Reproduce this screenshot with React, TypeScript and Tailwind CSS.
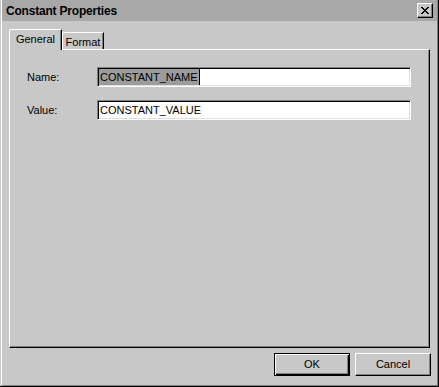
const CloseGlyph = () => {
  const rows = ["XX....XX", ".XX..XX.", "..XXXX..", "...XX...", "..XXXX..", ".XX..XX.", "XX....XX"];
  return (
    <svg width="8" height="7" viewBox="0 0 8 7" shapeRendering="crispEdges">
      {rows.flatMap((r, y) =>
        r.split("").map((c, x) => (c === "X" ? <rect key={`${x}-${y}`} x={x} y={y} width="1" height="1" fill="#000" /> : null))
      )}
    </svg>
  );
};

export default function App() {
  return (
    <div className="w-[439px] h-[387px] bg-[#c8c8c8] font-['Liberation_Sans',Arial,sans-serif] text-[11px] leading-none text-black select-none">
      <div className="h-full border-r border-b border-black pl-px">
        <div className="h-full flex flex-col border-l border-r border-b border-l-white border-r-[#808080] border-b-[#808080]">
          {/* title bar */}
          <div className="h-[21px] shrink-0 flex items-center justify-between bg-[#a8a8a8] pl-[4px] pr-[4px]">
            <span className="font-bold text-[12px] tracking-[-0.2px]">Constant Properties</span>
            <button className="w-[16px] h-[15px] flex items-center justify-center bg-[#c8c8c8] border-t border-l border-r border-b border-t-white border-l-white border-r-black border-b-black shadow-[inset_-1px_-1px_#808080]">
              <CloseGlyph />
            </button>
          </div>

          {/* tabs */}
          <div className="mt-[8px] pl-[7px] h-[20px] flex items-end">
            <div className="relative z-10 -mb-px w-[53px] h-[21px] bg-[#c8c8c8] border-t border-l border-r border-t-white border-l-white border-r-black rounded-tl-[2px] shadow-[inset_-1px_0_#808080] flex justify-center pt-[4px]">
              General
            </div>
            <div className="w-[42px] h-[17px] bg-[#c8c8c8] border-t border-l border-r border-t-white border-l-white border-r-black rounded-tl-[2px] shadow-[inset_-1px_0_#808080] flex justify-center pt-[4px]">
              Format
            </div>
          </div>

          {/* panel */}
          <div className="mx-[7px] h-[299px] shrink-0 border-t border-l border-r border-b border-t-white border-l-white border-r-black border-b-black shadow-[inset_-1px_-1px_#808080] pt-[17px] pl-[17px] flex flex-col gap-[13px]">
            <div className="flex items-center">
              <span className="w-[70px]">Name:</span>
              <div className="w-[314px] h-[20px] bg-white border-t border-l border-r border-b border-t-[#808080] border-l-[#808080] border-r-white border-b-white shadow-[inset_1px_1px_#000,inset_-1px_-1px_#dfdfdf] flex items-center pl-[1px]">
                <span className="h-[16px] px-[1px] bg-[#9c9c9c] flex items-center">CONSTANT_NAME</span>
                <span className="w-px h-[16px] bg-black" />
              </div>
            </div>
            <div className="flex items-center">
              <span className="w-[70px]">Value:</span>
              <div className="w-[314px] h-[20px] bg-white border-t border-l border-r border-b border-t-[#808080] border-l-[#808080] border-r-white border-b-white shadow-[inset_1px_1px_#000,inset_-1px_-1px_#dfdfdf] flex items-center pl-[2px]">
                CONSTANT_VALUE
              </div>
            </div>
          </div>

          {/* buttons */}
          <div className="flex justify-end gap-[5px] pt-[5px] pr-[6px]">
            <button className="w-[76px] h-[23px] bg-[#c8c8c8] border border-black shadow-[inset_1px_1px_#fff,inset_-1px_-1px_#000,inset_-2px_-2px_#808080] flex items-center justify-center">
              OK
            </button>
            <button className="w-[76px] h-[23px] bg-[#c8c8c8] border-t border-l border-r border-b border-t-white border-l-white border-r-black border-b-black shadow-[inset_-1px_-1px_#808080] flex items-center justify-center">
              Cancel
            </button>
          </div>
        </div>
      </div>
    </div>
  );
}
